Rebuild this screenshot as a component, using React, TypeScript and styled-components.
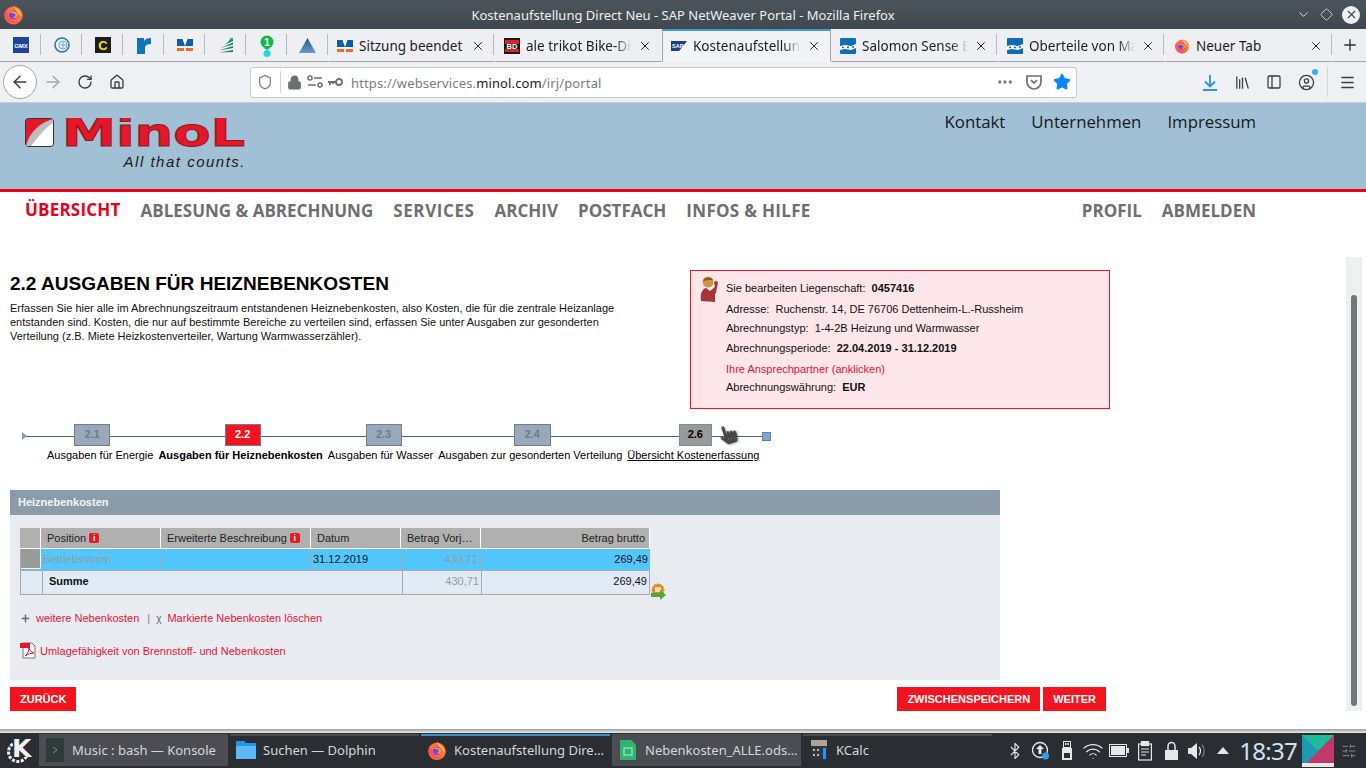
import React from 'react';
import styled, { createGlobalStyle } from 'styled-components';
import {
  ArrowLeft, ArrowRight, RotateCw, House, Shield, Lock, Ellipsis, Star, Library,
  PanelLeft, CircleUser, Menu, Plus, X, ChevronDown, Diamond, Bluetooth, Wifi, SlidersHorizontal,
} from 'lucide-react';
import { FaHandPointer } from 'react-icons/fa';

const GlobalStyle = createGlobalStyle`
  html, body { margin: 0; padding: 0; height: 100%; overflow: hidden; background: #fff; }
  #root { height: 100%; }
  * { box-sizing: border-box; }
`;

const Screen = styled.div`
  width: 1366px;
  height: 768px;
  display: flex;
  flex-direction: column;
  font-family: "Liberation Sans", Arial, sans-serif;
  overflow: hidden;
`;

/* window title */
const TitleBar = styled.div`
  height: 29px;
  flex: none;
  display: flex;
  align-items: center;
  background: linear-gradient(#4c555d, #40474e);
  color: #eff0f1;
  font: 13px "Noto Sans", sans-serif;
  padding: 0 6px 0 3px;
`;
const TitleText = styled.div`
  flex: 1;
  text-align: center;
  padding-left: 46px;
`;
const WindowButtons = styled.div`
  display: flex;
  align-items: center;
  gap: 9px;
  color: #eff0f1;
`;
const CloseDot = styled.span`
  width: 18px;
  height: 18px;
  border-radius: 50%;
  background: #eff0f1;
  color: #40474e;
  display: flex;
  align-items: center;
  justify-content: center;
`;

/* tab strip */
const TabStrip = styled.div`
  height: 33px;
  flex: none;
  display: flex;
  background: #eeeff2;
  font: 13.5px "Noto Sans", sans-serif;
  color: #1d1d20;
`;
const PinnedTab = styled.div`
  width: 41px;
  height: 100%;
  flex: none;
  display: flex;
  align-items: center;
  justify-content: center;
  border-bottom: 1px solid #a3a5a8;
  position: relative;
  &::after {
    content: "";
    position: absolute;
    right: 0;
    top: 5px;
    bottom: 6px;
    width: 1px;
    background: #b9babd;
  }
`;
const Tab = styled.div<{ $active?: boolean; $width?: number }>`
  width: ${(p) => p.$width ?? 167}px;
  height: 100%;
  flex: none;
  display: flex;
  align-items: center;
  padding: 0 9px 0 8px;
  gap: 6px;
  position: relative;
  border-bottom: 1px solid ${(p) => (p.$active ? 'transparent' : '#a3a5a8')};
  border-top: 2px solid ${(p) => (p.$active ? '#3a9ce0' : 'transparent')};
  border-left: 1px solid ${(p) => (p.$active ? '#a3a5a8' : 'transparent')};
  border-right: 1px solid ${(p) => (p.$active ? '#a3a5a8' : 'transparent')};
  background: ${(p) => (p.$active ? '#f2f3f5' : 'transparent')};
`;
const TabDivider = styled.span`
  position: absolute;
  right: 0;
  top: 3px;
  bottom: 6px;
  width: 1px;
  background: #b9babd;
`;
const TabLabel = styled.span<{ $fade?: boolean }>`
  flex: 1;
  overflow: hidden;
  white-space: nowrap;
  -webkit-mask-image: ${(p) => (p.$fade ? 'linear-gradient(to right, #000 84%, transparent)' : 'none')};
  mask-image: ${(p) => (p.$fade ? 'linear-gradient(to right, #000 84%, transparent)' : 'none')};
`;
const NewTab = styled.div`
  flex: 1;
  display: flex;
  align-items: center;
  justify-content: center;
  border-bottom: 1px solid #a3a5a8;
  color: #2f3033;
`;

/* toolbar */
const NavBar = styled.div`
  height: 41px;
  flex: none;
  display: flex;
  align-items: center;
  background: #eff0f3;
  border-bottom: 1px solid #c9cbce;
  padding-left: 3px;
  color: #3b3c40;
`;
const BackCircle = styled.div`
  width: 34px;
  height: 34px;
  border-radius: 50%;
  background: #fff;
  border: 1px solid #a5a6a9;
  display: flex;
  align-items: center;
  justify-content: center;
  flex: none;
`;
const NavButton = styled.div<{ $muted?: boolean; $push?: number }>`
  width: 32px;
  margin-left: ${(p) => p.$push ?? 0}px;
  display: flex;
  justify-content: center;
  align-items: center;
  position: relative;
  flex: none;
  color: ${(p) => (p.$muted ? '#a3a4a7' : '#3b3c40')};
`;
const UrlBar = styled.div`
  width: 827px;
  height: 31px;
  flex: none;
  margin-left: 117px;
  background: #fff;
  border: 1px solid #c6c8cb;
  border-radius: 3px;
  display: flex;
  align-items: center;
  padding-left: 6px;
  font: 13px "Noto Sans", sans-serif;
  color: #7b7c80;
`;
const UrlDivider = styled.span`
  width: 1px;
  height: 22px;
  background: #d4d5d8;
  margin: 0 6px 0 7px;
`;
const UrlIcon = styled.svg<{ $left?: number }>`
  flex: none;
  margin-left: ${(p) => p.$left ?? 0}px;
`;
const UrlStar = styled(Star)`
  margin: 0 5px 0 10px;
  flex: none;
`;
const UrlText = styled.span`
  margin-left: 8px;
  flex: 1;
  letter-spacing: 0.13px;
  position: relative;
  top: 1px;
  b { font-weight: 400; color: #1d1d20; }
`;
const ToolDivider = styled.span`
  width: 1px;
  height: 30px;
  background: #d4d5d8;
  margin: 0 3px 0 5px;
`;
const Dot = styled.span`
  position: absolute;
  top: -5px;
  right: 4px;
  width: 6px;
  height: 6px;
  border-radius: 50%;
  background: #2fb0ef;
`;

/* web page */
const WebPage = styled.div`
  height: 626px;
  flex: none;
  background: #fff;
  display: flex;
  flex-direction: column;
`;
const SiteHeader = styled.div`
  height: 89px;
  flex: none;
  background: #a2c0d5;
  border-bottom: 3px solid #e8001c;
  display: flex;
  justify-content: space-between;
  padding: 15px 110px 0 25px;
`;
const Logo = styled.div`
  display: flex;
  flex-direction: column;
  align-items: flex-end;
  width: 221px;
`;
const Tagline = styled.div`
  font: italic 15px "Liberation Sans", sans-serif;
  letter-spacing: 1.5px;
  color: #1c1c1c;
  margin-top: 6px;
`;
const TopLinks = styled.div`
  display: flex;
  gap: 26px;
  font: 16.8px/18px "Open Sans", sans-serif;
  color: #15191c;
  margin-top: -5px;
`;
const MainNav = styled.div`
  height: 38px;
  flex: none;
  display: flex;
  justify-content: space-between;
  align-items: center;
  padding: 0 110px 2px 25px;
  font: 700 17px "Open Sans", sans-serif;
  color: #6f6f6f;
`;
const NavGroup = styled.div`
  display: flex;
  gap: 20px;
`;
const NavItem = styled.span<{ $active?: boolean; $track?: number }>`
  color: ${(p) => (p.$active ? '#e8001c' : '#6f6f6f')};
  letter-spacing: ${(p) => p.$track ?? 0}px;
  position: relative;
  top: ${(p) => (p.$active ? '-1px' : '0')};
`;
const ContentRow = styled.div`
  flex: 1;
  display: flex;
  min-height: 0;
`;
const Main = styled.div`
  flex: 1;
  padding: 40px 0 0 10px;
  font-size: 11px;
  color: #000;
`;
const TopRow = styled.div`
  height: 139px;
  display: flex;
  justify-content: space-between;
  width: 1100px;
`;
const Intro = styled.div`
  width: 640px;
`;
const Heading = styled.h1`
  margin: 4px 0 7px;
  font: 700 19.05px/20px "Liberation Sans", sans-serif;
  color: #000;
`;
const IntroText = styled.p`
  margin: 0;
  font-size: 11px;
  line-height: 14px;
  color: #111;
`;
const InfoBox = styled.div`
  width: 420px;
  height: 139px;
  background: #fde6e9;
  border: 1px solid #f2141e;
  padding: 11px 0 0 35px;
  position: relative;
`;
const InfoRow = styled.div<{ $top?: number; $link?: boolean }>`
  margin-top: ${(p) => p.$top ?? 0}px;
  line-height: 13px;
  white-space: pre;
  color: ${(p) => (p.$link ? '#e8113a' : '#111')};
`;
const PersonIcon = styled.svg`
  position: absolute;
  left: 9px;
  top: 5px;
`;
const Stepper = styled.div`
  position: relative;
  margin: 15px 0 0 12px;
  width: 749px;
  padding-left: 25px;
  display: flex;
  gap: 5px;
`;
const StepLine = styled.div`
  position: absolute;
  left: 0;
  right: 0;
  top: 12px;
  height: 1px;
  background: #3f6a94;
`;
const LineStart = styled.span`
  position: absolute;
  left: 0;
  top: 8px;
  border-left: 5px solid #7c9fc7;
  border-top: 4.5px solid transparent;
  border-bottom: 4.5px solid transparent;
`;
const LineEnd = styled.span`
  position: absolute;
  right: 0;
  top: 8px;
  width: 9px;
  height: 9px;
  background: #7fa6d3;
  border: 1px solid #5d83ad;
`;
const Step = styled.div`
  display: flex;
  flex-direction: column;
  align-items: center;
  position: relative;
`;
const StepBox = styled.div<{ $state?: 'active' | 'done'; $w: number; $shift?: number }>`
  width: ${(p) => p.$w}px;
  height: 22px;
  position: relative;
  left: ${(p) => p.$shift ?? 0}px;
  display: flex;
  align-items: center;
  justify-content: center;
  font-weight: 700;
  font-size: 11px;
  padding-bottom: 2px;
  border: 1px solid ${(p) => (p.$state === 'done' ? '#6d8fb0' : '#6d7f92')};
  background: ${(p) => (p.$state === 'active' ? '#f2141e' : p.$state === 'done' ? '#999' : '#9aa9ba')};
  color: ${(p) => (p.$state === 'active' ? '#fff' : p.$state === 'done' ? '#000' : '#6b7b90')};
`;
const StepLabel = styled.div<{ $bold?: boolean; $link?: boolean }>`
  margin-top: 2px;
  line-height: 14px;
  white-space: nowrap;
  font-weight: ${(p) => (p.$bold ? 700 : 400)};
  text-decoration: ${(p) => (p.$link ? 'underline' : 'none')};
`;
const Pointer = styled.div`
  position: absolute;
  left: 697px;
  top: 1px;
  color: #444;
  transform: rotate(-18deg);
  filter: drop-shadow(1px 1px 1px rgba(0, 0, 0, 0.3));
`;
const Panel = styled.section`
  width: 990px;
  margin-top: 28px;
  background: #e8ecf1;
  height: 190px;
`;
const PanelHead = styled.div`
  height: 25px;
  background: #8b9ba9;
  color: #f3f5f7;
  font-weight: 700;
  display: flex;
  align-items: center;
  padding: 0 0 2px 8px;
`;
const PanelBody = styled.div`
  padding: 13px 0 0 10px;
  position: relative;
`;
const HeadRow = styled.div`
  display: grid;
  grid-template-columns: 21px 120px 150px 90px 80px 169px;
  width: 630px;
  height: 21px;
  background: #fff;
`;
const HeadCell = styled.div<{ $right?: boolean }>`
  background: #b0b0b0;
  margin-right: 1px;
  height: 20px;
  display: flex;
  align-items: center;
  justify-content: ${(p) => (p.$right ? 'flex-end' : 'flex-start')};
  gap: 3px;
  padding: 0 4px 0 6px;
  color: #222;
  white-space: nowrap;
`;
const InfoBadge = styled.span`
  width: 10px;
  height: 10px;
  background: #f2141e;
  border-radius: 2px;
  color: #fff;
  font: 700 9px/10px "Liberation Sans", sans-serif;
  text-align: center;
  display: inline-block;
`;
const DataRow = styled.div`
  display: grid;
  grid-template-columns: 20px 120px 150px 90px 80px 169px;
  width: 630px;
  height: 22px;
  background: #52c7ff;
  border-bottom: 1px solid #a9a9a9;
  border-left: 1px solid #a9a9a9;
`;
const Cell = styled.div<{ $right?: boolean; $muted?: boolean; $line?: boolean }>`
  display: flex;
  align-items: center;
  justify-content: ${(p) => (p.$right ? 'flex-end' : 'flex-start')};
  padding: 0 2px 2px;
  color: ${(p) => (p.$muted ? '#9a9a9a' : '#111')};
  border-right: ${(p) => (p.$line ? '1px solid #a9a9a9' : 'none')};
  white-space: nowrap;
`;
const RowHandle = styled.div`
  background: #9b9b9b;
  border-right: 1px solid #fff;
  border-bottom: 1px solid #fff;
  height: 20px;
`;
const SumRow = styled.div`
  display: grid;
  grid-template-columns: 22px 360px 79px 1fr;
  width: 630px;
  height: 24px;
  background: #e1ebf5;
  border: 1px solid #a9a9a9;
  border-top: none;
`;
const SumCell = styled(Cell)`
  padding-bottom: 4px;
`;
const SumTitle = styled(SumCell)`
  font-weight: 700;
  padding-left: 6px;
`;
const ExportIcon = styled.svg`
  position: absolute;
  left: 640px;
  top: 67px;
`;
const Actions = styled.div`
  display: flex;
  align-items: center;
  margin-top: 17px;
  color: #e8113a;
  line-height: 13px;
`;
const ActionPlus = styled(Plus)`
  margin-right: 5px;
  flex: none;
`;
const ActionSep = styled.span`
  color: #9b7a70;
  margin: 0 6px 0 8px;
`;
const ActionCross = styled.span`
  color: #666;
  font-size: 10px;
  margin-right: 6px;
`;
const PdfLine = styled.div`
  display: flex;
  align-items: center;
  gap: 3px;
  margin-top: 17px;
  color: #e8113a;
`;
const ButtonRow = styled.div`
  width: 1096px;
  display: flex;
  margin-top: 7px;
`;
const RedButton = styled.button<{ $push?: boolean }>`
  height: 24px;
  border: none;
  background: #f2141e;
  color: #fff;
  font: 700 11px "Liberation Sans", sans-serif;
  padding: 0 10px;
  margin-left: ${(p) => (p.$push ? 'auto' : '3px')};
  &:first-child { margin-left: 0; }
`;
const ScrollTrack = styled.div`
  width: 16px;
  height: 454px;
  margin: 27px 4px 0 0;
  background: #eff0f2;
  padding: 38px 5px 5px;
  flex: none;
`;
const ScrollThumb = styled.div`
  height: 100%;
  background: #737578;
  border-radius: 3px;
`;

const DropEdge = styled.div`
  height: 4px;
  flex: none;
  background: linear-gradient(#9a9c9e, #eceded);
`;

/* panel at the bottom */
const Taskbar = styled.div`
  flex: 1;
  display: flex;
  align-items: stretch;
  background: #2a2e32;
  color: #d5d7d9;
  font: 13px "Noto Sans", sans-serif;
`;
const KdeButton = styled.div`
  width: 39px;
  display: flex;
  align-items: center;
  justify-content: center;
  flex: none;
`;
const Task = styled.div<{ $state?: 'open' | 'hover' | 'focus' }>`
  width: 189px;
  margin: 1px 2px 2px 0;
  flex: none;
  display: flex;
  align-items: center;
  gap: 7px;
  padding: 0 6px 2px;
  border-top: 2px solid ${(p) => (p.$state === 'focus' ? '#3d8fbf' : p.$state === 'hover' ? 'transparent' : '#4b4d53')};
  background: ${(p) => (p.$state === 'hover' ? '#4b4d53' : 'transparent')};
  white-space: nowrap;
  overflow: hidden;
`;
const TaskIcon = styled.span`
  width: 20px;
  flex: none;
  display: flex;
  justify-content: center;
  align-items: center;
`;
const Tray = styled.div`
  margin-left: auto;
  display: flex;
  align-items: center;
  padding-right: 9px;
  color: #e6e7e8;
`;
const TrayIcon = styled.span`
  width: 26px;
  flex: none;
  display: flex;
  justify-content: center;
  align-items: center;
`;
const Clock = styled.div`
  font: 24px "Noto Sans", sans-serif;
  color: #cfe3f2;
  letter-spacing: -0.7px;
  margin: 0 5px 0 3px;
`;
const SettingsSlot = styled.span`
  width: 23px;
  display: flex;
  justify-content: flex-end;
  color: #8d9094;
`;

/* small drawings */
const FirefoxLogo: React.FC<{ size: number }> = ({ size }) => (
  <svg width={size} height={size} viewBox="0 0 24 24">
    <circle cx="12" cy="13" r="10.5" fill="#ff7139" />
    <path d="M12 1c1 3 5 4 7 7 2 3 3 5 3 7-3-4-8-6-10-14z" fill="#ffbd4f" />
    <path d="M3 7c-2 4-1 9 2 12 4 4 10 4 14 1-5 1-10-1-12-5C6 12 5 9 3 7z" fill="#ff4f5e" />
    <circle cx="12" cy="12.5" r="5" fill="#7542e5" />
    <path d="M7 10c3-3 9-2 10 2 0 4-4 5-6 3 3 0 4-2 3-3-1-2-4-2-7-2z" fill="#ff9a3c" />
  </svg>
);
const VrIcon = () => (
  <svg width="16" height="15" viewBox="0 0 16 15">
    <rect x="0" y="1" width="16" height="7" fill="#0a5ea8" />
    <path d="M5.500 1h5L8 8z" fill="#fff" />
    <rect x="0" y="10" width="7" height="3" fill="#f26a1b" />
    <rect x="9" y="10" width="7" height="3" fill="#f26a1b" />
  </svg>
);
const BlockIcon = () => (
  <svg width="16" height="16" viewBox="0 0 16 16">
    <rect width="16" height="16" rx="1" fill="#0f6cb6" />
    <path d="M0 8l5-1 6 1 5-2v4l-5 2-6-1-5 1z" fill="#fff" />
    <path d="M2 9.500h2M7 9.500h2M12 9h2" stroke="#0f6cb6" strokeWidth="1.500" />
  </svg>
);
const MinolLogo = () => (
  <svg width="221" height="29" viewBox="0 0 221 29">
    <rect x="0.5" y="0.5" width="28" height="28" rx="3" fill="#e7172a" stroke="#333" />
    <path d="M1 28C4 15 14 5 28 1v24a3 3 0 0 1-3 3z" fill="#bdbdbd" />
    <path d="M6 28C12 20 20 10 28 5v20a3 3 0 0 1-3 3z" fill="#fff" />
    <text
      x="37"
      y="28"
      fontFamily="DejaVu Sans"
      fontWeight="700"
      fontSize="39"
      textLength="183"
      lengthAdjust="spacingAndGlyphs"
      fill="#e7172a"
      stroke="#8e1a22"
      strokeWidth="1"
    >
      MinoL
    </text>
  </svg>
);
const TabClose = () => <X size={14} strokeWidth={1.6} />;

const UrlBarContent: React.FC = () => (
  <UrlBar>
    <Shield size={16} strokeWidth={1.8} />
    <UrlDivider />
    <Lock size={15} strokeWidth={2.4} color="#6e6f73" fill="#6e6f73" />
    <UrlIcon $left={5} width="16" height="14" viewBox="0 0 16 14" fill="none" stroke="#6e6f73" strokeWidth="1.500">
      <circle cx="3" cy="3" r="2" />
      <path d="M7 3h8M1 10h8" />
      <circle cx="13" cy="10" r="2" />
    </UrlIcon>
    <UrlIcon $left={4} width="16" height="10" viewBox="0 0 16 10" fill="none" stroke="#6e6f73" strokeWidth="1.800">
      <circle cx="12" cy="5" r="3" />
      <path d="M9 5H1M3 5v3M6 5v2" />
    </UrlIcon>
    <UrlText>https://webservices.<b>minol.com</b>/irj/portal</UrlText>
    <Ellipsis size={18} strokeWidth={2.4} />
    <UrlIcon $left={11} width="18" height="18" viewBox="0 0 18 18" fill="none">
      <path d="M2 3h14v6a7 7 0 0 1-14 0z" stroke="#6e6f73" strokeWidth="1.700" />
      <path d="M6 7l3 3 3-3" stroke="#6e6f73" strokeWidth="1.700" />
    </UrlIcon>
    <UrlStar size={18} fill="#0a84ff" color="#0a84ff" />
  </UrlBar>
);

const App: React.FC = () => {
  return (
    <Screen>
      <GlobalStyle />
      <TitleBar>
        <FirefoxLogo size={21} />
        <TitleText>Kostenaufstellung Direct Neu - SAP NetWeaver Portal - Mozilla Firefox</TitleText>
        <WindowButtons>
          <ChevronDown size={15} strokeWidth={1.4} />
          <Diamond size={13} strokeWidth={1.4} />
          <CloseDot><X size={13} strokeWidth={2} /></CloseDot>
        </WindowButtons>
      </TitleBar>

      <TabStrip>
        <PinnedTab>
          <svg width="16" height="16" viewBox="0 0 16 16">
            <rect width="16" height="16" fill="#1c449b" />
            <text x="8" y="10.500" fontSize="6" fontWeight="700" fill="#fff" textAnchor="middle" fontFamily="Liberation Sans">GMX</text>
          </svg>
        </PinnedTab>
        <PinnedTab>
          <svg width="16" height="16" viewBox="0 0 16 16" fill="none">
            <circle cx="8" cy="8" r="7" stroke="#2a78b8" strokeWidth="1.600" />
            <circle cx="9" cy="8" r="4" stroke="#6fa6cf" />
            <path d="M7 8h5M9 5v6" stroke="#6fa6cf" />
          </svg>
        </PinnedTab>
        <PinnedTab>
          <svg width="16" height="16" viewBox="0 0 16 16">
            <rect width="16" height="16" fill="#1d1d1b" />
            <text x="8" y="13" fontSize="13" fontWeight="700" fill="#f6e11b" textAnchor="middle" fontFamily="Liberation Sans">C</text>
          </svg>
        </PinnedTab>
        <PinnedTab>
          <svg width="16" height="17" viewBox="0 0 16 17">
            <path d="M1 1h7v3c1-2 4-3 7-3v6c-3 0-6 1-6 4v6H1z" fill="#1273bd" />
          </svg>
        </PinnedTab>
        <PinnedTab><VrIcon /></PinnedTab>
        <PinnedTab>
          <svg width="16" height="16" viewBox="0 0 16 16">
            <path d="M1 15.500L15 15V13zM1 13.500L15 11V9zM3 11L15 7.500V5.500zM6 8l9-4V1.500zM10 5l3-4h2v1z" fill="#14855b" />
          </svg>
        </PinnedTab>
        <PinnedTab>
          <svg width="16" height="23" viewBox="0 0 16 23">
            <circle cx="8" cy="8" r="6.500" fill="#12b84a" />
            <path d="M5 14h6l-3 2z" fill="#12b84a" />
            <text x="8" y="11.500" fontSize="10" fontWeight="700" fill="#fff" textAnchor="middle" fontFamily="Liberation Sans">1</text>
            <circle cx="8" cy="19.500" r="3.500" fill="#25d6e0" />
          </svg>
        </PinnedTab>
        <PinnedTab>
          <svg width="17" height="15" viewBox="0 0 17 15">
            <defs>
              <linearGradient id="tri" x1="0" y1="0" x2="0" y2="1">
                <stop offset="0" stopColor="#1d5596" />
                <stop offset="1" stopColor="#6a9ccc" />
              </linearGradient>
            </defs>
            <path d="M8.500 0L17 15H0z" fill="url(#tri)" />
          </svg>
        </PinnedTab>
        <Tab>
          <VrIcon />
          <TabLabel>Sitzung beendet</TabLabel>
          <TabClose />
          <TabDivider />
        </Tab>
        <Tab>
          <svg width="16" height="16" viewBox="0 0 16 16">
            <rect width="16" height="16" fill="#191919" />
            <rect x="1" y="2" width="14" height="4" fill="#d8232a" />
            <rect x="1" y="11" width="14" height="3" fill="#d8232a" />
            <text x="8" y="11" fontSize="7.500" fontWeight="700" fill="#fff" textAnchor="middle" fontFamily="Liberation Sans">BD</text>
          </svg>
          <TabLabel $fade>ale trikot Bike-Dis</TabLabel>
          <TabClose />
        </Tab>
        <Tab $active $width={169}>
          <svg width="16" height="10" viewBox="0 0 16 10">
            <path d="M0 0h16L8 10H0z" fill="#1a3f8b" />
            <text x="1" y="6.800" fontSize="5.500" fontWeight="700" fill="#fff" fontFamily="Liberation Sans">SAP</text>
          </svg>
          <TabLabel $fade>Kostenaufstellun</TabLabel>
          <TabClose />
        </Tab>
        <Tab>
          <BlockIcon />
          <TabLabel $fade>Salomon Sense E</TabLabel>
          <TabClose />
          <TabDivider />
        </Tab>
        <Tab>
          <BlockIcon />
          <TabLabel $fade>Oberteile von Ma</TabLabel>
          <TabClose />
          <TabDivider />
        </Tab>
        <Tab $width={168}>
          <FirefoxLogo size={16} />
          <TabLabel>Neuer Tab</TabLabel>
          <TabClose />
          <TabDivider />
        </Tab>
        <NewTab><Plus size={18} strokeWidth={1.8} /></NewTab>
      </TabStrip>

      <NavBar>
        <BackCircle><ArrowLeft size={20} strokeWidth={1.8} /></BackCircle>
        <NavButton $muted><ArrowRight size={20} strokeWidth={1.6} /></NavButton>
        <NavButton><RotateCw size={16} strokeWidth={2} /></NavButton>
        <NavButton><House size={16} strokeWidth={2} /></NavButton>
        <UrlBarContent />
        <NavButton $push={117}>
          <svg width="16" height="17" viewBox="0 0 16 17" fill="none" stroke="#2a90e8" strokeWidth="1.800">
            <path d="M8 1v11M3 7.500l5 5 5-5M1 16h14" />
          </svg>
        </NavButton>
        <NavButton><Library size={17} strokeWidth={1.8} /></NavButton>
        <NavButton><PanelLeft size={16} strokeWidth={1.9} /></NavButton>
        <NavButton><CircleUser size={17} strokeWidth={1.8} /><Dot /></NavButton>
        <ToolDivider />
        <NavButton><Menu size={17} strokeWidth={2} /></NavButton>
      </NavBar>

      <WebPage>
        <SiteHeader>
          <Logo>
            <MinolLogo />
            <Tagline>All that counts.</Tagline>
          </Logo>
          <TopLinks>
            <span>Kontakt</span>
            <span>Unternehmen</span>
            <span>Impressum</span>
          </TopLinks>
        </SiteHeader>
        <MainNav>
          <NavGroup>
            <NavItem $active $track={0.2}>ÜBERSICHT</NavItem>
            <NavItem>ABLESUNG &amp; ABRECHNUNG</NavItem>
            <NavItem $track={0.6}>SERVICES</NavItem>
            <NavItem>ARCHIV</NavItem>
            <NavItem>POSTFACH</NavItem>
            <NavItem $track={0.3}>INFOS &amp; HILFE</NavItem>
          </NavGroup>
          <NavGroup>
            <NavItem>PROFIL</NavItem>
            <NavItem>ABMELDEN</NavItem>
          </NavGroup>
        </MainNav>
        <ContentRow>
          <Main>
            <TopRow>
              <Intro>
                <Heading>2.2 AUSGABEN FÜR HEIZNEBENKOSTEN</Heading>
                <IntroText>
                  Erfassen Sie hier alle im Abrechnungszeitraum entstandenen Heiznebenkosten, also Kosten, die für die zentrale Heizanlage<br />
                  entstanden sind. Kosten, die nur auf bestimmte Bereiche zu verteilen sind, erfassen Sie unter Ausgaben zur gesonderten<br />
                  Verteilung (z.B. Miete Heizkostenverteiler, Wartung Warmwasserzähler).
                </IntroText>
              </Intro>
              <InfoBox>
                <PersonIcon width="21" height="26" viewBox="0 0 21 26">
                  <path d="M1 25c-1-7 1-12 5-13l4 3 5-4-1-5 2-1 2 1-2 11-1 1v8z" fill="#a8343a" />
                  <circle cx="8" cy="6" r="5.500" fill="#c99a45" />
                  <path d="M3 5c1-4 8-5 10-1-3 0-7 0-10 1z" fill="#8a5a22" />
                </PersonIcon>
                <InfoRow>Sie bearbeiten Liegenschaft:  <b>0457416</b></InfoRow>
                <InfoRow $top={8}>Adresse:  Ruchenstr. 14, DE 76706 Dettenheim-L.-Russheim</InfoRow>
                <InfoRow $top={6}>Abrechnungstyp:  1-4-2B Heizung und Warmwasser</InfoRow>
                <InfoRow $top={7}>Abrechnungsperiode:  <b>22.04.2019 - 31.12.2019</b></InfoRow>
                <InfoRow $top={8} $link>Ihre Ansprechpartner (anklicken)</InfoRow>
                <InfoRow $top={5}>Abrechnungswährung:  <b>EUR</b></InfoRow>
              </InfoBox>
            </TopRow>

            <Stepper>
              <StepLine />
              <LineStart />
              <LineEnd />
              <Step>
                <StepBox $w={36} $shift={-8}>2.1</StepBox>
                <StepLabel>Ausgaben für Energie</StepLabel>
              </Step>
              <Step>
                <StepBox $w={36} $state="active" $shift={2}>2.2</StepBox>
                <StepLabel $bold>Ausgaben für Heiznebenkosten</StepLabel>
              </Step>
              <Step>
                <StepBox $w={36} $shift={3}>2.3</StepBox>
                <StepLabel>Ausgaben für Wasser</StepLabel>
              </Step>
              <Step>
                <StepBox $w={37} $shift={2}>2.4</StepBox>
                <StepLabel>Ausgaben zur gesonderten Verteilung</StepLabel>
              </Step>
              <Step>
                <StepBox $w={33} $state="done" $shift={2}>2.6</StepBox>
                <StepLabel $link>Übersicht Kostenerfassung</StepLabel>
              </Step>
              <Pointer><FaHandPointer size={19} /></Pointer>
            </Stepper>

            <Panel>
              <PanelHead>Heiznebenkosten</PanelHead>
              <PanelBody>
                <HeadRow>
                  <HeadCell />
                  <HeadCell>Position <InfoBadge>i</InfoBadge></HeadCell>
                  <HeadCell>Erweiterte Beschreibung <InfoBadge>i</InfoBadge></HeadCell>
                  <HeadCell>Datum</HeadCell>
                  <HeadCell>Betrag Vorj…</HeadCell>
                  <HeadCell $right>Betrag brutto</HeadCell>
                </HeadRow>
                <DataRow>
                  <RowHandle />
                  <Cell $muted $line>Betriebsstrom</Cell>
                  <Cell $line />
                  <Cell $line>31.12.2019</Cell>
                  <Cell $right $muted $line>430,71</Cell>
                  <Cell $right>269,49</Cell>
                </DataRow>
                <SumRow>
                  <SumCell $line />
                  <SumTitle $line>Summe</SumTitle>
                  <SumCell $right $muted $line>430,71</SumCell>
                  <SumCell $right>269,49</SumCell>
                </SumRow>
                <ExportIcon width="17" height="18" viewBox="0 0 17 18">
                  <path d="M8 1l1.500 1.500 2-.5.5 2 2 .5-.5 2 1.500 1.500-1.500 1.500.5 2-2 .5H3l-1-.5.5-2L1 8l1.500-1.500-.5-2 2-.5.5-2 2 .5z" fill="#e08a2c" />
                  <rect x="5" y="5" width="6" height="5" fill="#f6d9a8" />
                  <path d="M1 11h9V8l6 5-6 5v-3H1z" fill="#4fa83d" />
                </ExportIcon>
                <Actions>
                  <ActionPlus size={11} color="#666" strokeWidth={3} />
                  weitere Nebenkosten
                  <ActionSep>|</ActionSep>
                  <ActionCross>χ</ActionCross>
                  Markierte Nebenkosten löschen
                </Actions>
                <PdfLine>
                  <svg width="17" height="17" viewBox="0 0 17 17">
                    <path d="M3 1h9l3 3v12H3z" fill="#fff" stroke="#777" />
                    <rect x="0" y="1" width="10" height="5" fill="#e2132a" />
                    <path d="M5 14c3-2 4-6 4-9 0 3 2 5 5 6-3 0-6 1-9 3z" fill="none" stroke="#e2132a" />
                  </svg>
                  Umlagefähigkeit von Brennstoff- und Nebenkosten
                </PdfLine>
              </PanelBody>
            </Panel>
            <ButtonRow>
              <RedButton>ZURÜCK</RedButton>
              <RedButton $push>ZWISCHENSPEICHERN</RedButton>
              <RedButton>WEITER</RedButton>
            </ButtonRow>
          </Main>
          <ScrollTrack><ScrollThumb /></ScrollTrack>
        </ContentRow>
      </WebPage>
      <DropEdge />

      <Taskbar>
        <KdeButton>
          <svg width="28" height="28" viewBox="0 0 28 28">
            <circle cx="12" cy="15" r="9.500" fill="none" stroke="#eff0f1" strokeWidth="3" strokeDasharray="3 1.500" />
            <rect x="7" y="1" width="17" height="19" fill="#2a2e32" />
            <text x="6" y="20" fontSize="25" fontWeight="700" fill="#eff0f1" fontFamily="DejaVu Sans">K</text>
          </svg>
        </KdeButton>
        <Task $state="hover">
          <TaskIcon>
            <svg width="18" height="24" viewBox="0 0 18 24">
              <rect width="18" height="24" fill="#2f3a3a" />
              <path d="M7 9l4 3-4 3" fill="none" stroke="#7f8b8b" />
            </svg>
          </TaskIcon>
          Music : bash — Konsole
        </Task>
        <Task>
          <TaskIcon>
            <svg width="20" height="20" viewBox="0 0 20 20">
              <path d="M0 1h8l2 2h10v16H0z" fill="#1d99f3" />
              <rect y="6" width="20" height="13" fill="#5cb8f7" />
            </svg>
          </TaskIcon>
          Suchen — Dolphin
        </Task>
        <Task $state="focus">
          <TaskIcon><FirefoxLogo size={21} /></TaskIcon>
          Kostenaufstellung Dire…
        </Task>
        <Task $state="hover">
          <TaskIcon>
            <svg width="16" height="20" viewBox="0 0 16 20">
              <path d="M0 0h11l5 5v15H0z" fill="#2fb573" />
              <rect x="4" y="8" width="8" height="7" fill="none" stroke="#bfe9d2" />
            </svg>
          </TaskIcon>
          Nebenkosten_ALLE.ods…
        </Task>
        <Task>
          <TaskIcon>
            <svg width="16" height="20" viewBox="0 0 16 20">
              <rect width="16" height="20" fill="#31363b" />
              <rect x="0" y="0" width="16" height="6" fill="#a9a59a" />
              <rect x="12" y="8" width="3" height="11" fill="#1d99f3" />
              <path d="M2 9h2v2H2zm4 0h2v2H6zM2 14h2v2H2zm4 0h2v2H6z" fill="#bbb" />
            </svg>
          </TaskIcon>
          KCalc
        </Task>
        <Tray>
          <TrayIcon><Bluetooth size={18} strokeWidth={1.5} /></TrayIcon>
          <TrayIcon>
            <svg width="18" height="20" viewBox="0 0 18 20">
              <circle cx="8" cy="9" r="7.500" fill="none" stroke="#e6e7e8" strokeWidth="1.300" />
              <path d="M8 4l4 4h-2.500v5h-3V8H4z" fill="#e6e7e8" />
              <circle cx="13.500" cy="15" r="3.500" fill="#2fa0e8" />
            </svg>
          </TrayIcon>
          <TrayIcon>
            <svg width="12" height="20" viewBox="0 0 12 20">
              <rect x="2.500" y="0.500" width="7" height="6" fill="none" stroke="#e6e7e8" />
              <rect x="4" y="2" width="1.500" height="2" fill="#e6e7e8" />
              <rect x="6.500" y="2" width="1.500" height="2" fill="#e6e7e8" />
              <path d="M1 7h10v12H1z" fill="#e6e7e8" />
              <rect x="3" y="12" width="6" height="5" fill="#2a2e32" />
            </svg>
          </TrayIcon>
          <TrayIcon><Wifi size={22} strokeWidth={1.3} /></TrayIcon>
          <TrayIcon>
            <svg width="20" height="13" viewBox="0 0 20 13">
              <rect x="0.500" y="0.500" width="17" height="12" fill="none" stroke="#e6e7e8" />
              <rect x="2" y="2" width="14" height="9" fill="#e6e7e8" />
              <rect x="18" y="4" width="2" height="5" fill="#e6e7e8" />
            </svg>
          </TrayIcon>
          <TrayIcon>
            <svg width="14" height="20" viewBox="0 0 14 20" fill="none" stroke="#e6e7e8" strokeWidth="1.200">
              <rect x="0.600" y="3" width="12.800" height="16" />
              <rect x="3.500" y="0.500" width="7" height="4" fill="#e6e7e8" />
              <path d="M3 8h8M3 11h8M3 14h5" />
            </svg>
          </TrayIcon>
          <TrayIcon>
            <svg width="13" height="19" viewBox="0 0 13 19" fill="none">
              <path d="M3 9V5a3.500 3.500 0 0 1 7 0v4" stroke="#e6e7e8" strokeWidth="1.500" />
              <rect y="9" width="13" height="10" fill="#e6e7e8" />
            </svg>
          </TrayIcon>
          <TrayIcon>
            <svg width="19" height="18" viewBox="0 0 19 18" fill="none">
              <path d="M0 6h3l6-5v16l-6-5H0z" fill="#e6e7e8" />
              <path d="M11 5c2 2 2 6 0 8" stroke="#e6e7e8" strokeWidth="1.300" />
              <path d="M14 3c3 3 3 9 0 12" stroke="#75787c" strokeWidth="1.300" />
            </svg>
          </TrayIcon>
          <TrayIcon>
            <svg width="12" height="7" viewBox="0 0 12 7">
              <path d="M6 0l6 7H0z" fill="#e6e7e8" />
            </svg>
          </TrayIcon>
          <Clock>18:37</Clock>
          <svg width="32" height="32" viewBox="0 0 32 32">
            <rect width="32" height="32" fill="#1abc9c" />
            <path d="M32 0v32H0z" fill="#c0396b" />
            <path d="M0 0l16 16L0 32z" fill="#1d99b3" />
            <rect y="28" width="32" height="4" fill="#e8e8e8" />
          </svg>
          <SettingsSlot><SlidersHorizontal size={16} strokeWidth={1.4} /></SettingsSlot>
        </Tray>
      </Taskbar>
    </Screen>
  );
};

export default App;
